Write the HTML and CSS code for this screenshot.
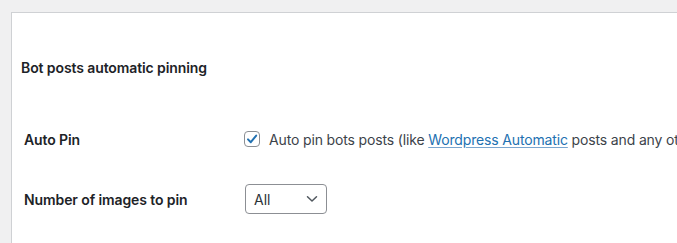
FILE: index.html
```html
<!DOCTYPE html>
<html lang="en">
<head>
    <meta charset="UTF-8">
    <title>Pin settings</title>
    <link rel="stylesheet" href="styles.css">
</head>
<body>

<div class="panel">
    <h3 class="panel-title">Bot posts automatic pinning</h3>

    <div class="form-table">
        <div class="form-row">
            <div class="form-label">Auto Pin</div>
            <div class="form-field">
                <label class="check">
                    <span class="check-box">
                        <svg width="14" height="14" viewBox="0 0 14 14"><path d="M3 7.4 L5.8 10.2 L11.2 3.6" fill="none" stroke="#2271b1" stroke-width="2" stroke-linecap="round" stroke-linejoin="round"/></svg>
                    </span>
                    <span class="check-text">Auto pin bots posts (like <a href="#">Wordpress Automatic</a> posts and any other bot plugin posts)</span>
                </label>
            </div>
        </div>
        <div class="form-row">
            <div class="form-label">Number of images to pin</div>
            <div class="form-field">
                <div class="select">
                    <span>All</span>
                    <svg width="12" height="8" viewBox="0 0 12 8"><path d="M1.5 1.8 L6 6 L10.5 1.8" fill="none" stroke="#50575e" stroke-width="1.5" stroke-linecap="round" stroke-linejoin="round"/></svg>
                </div>
            </div>
        </div>
    </div>
</div>

</body>
</html>
```

FILE: styles.css
```css
body {
    margin: 0;
    padding: 12px 0 0 11px;
    background-color: #f0f0f1;
    font-family: Inter, "Noto Sans", sans-serif;
    font-size: 14px;
    color: #3c434a;
    overflow: hidden;
    height: 231px;
}
.panel {
    background-color: #fff;
    border: 1px solid #cfd1d4;
    border-right: none;
    border-bottom: none;
    height: 230px;
    overflow: hidden;
    white-space: nowrap;
}
.panel-title {
    margin: 0;
    padding: 46px 0 0 9px;
    font-size: 14px;
    line-height: 18px;
    font-weight: 600;
    color: #1d2327;
    letter-spacing: -0.1px;
}
.form-table {
    margin-top: 32px;
    padding-left: 12px;
}
.form-row {
    display: grid;
    grid-template-columns: 221px auto;
    align-items: center;
    height: 60px;
}
.form-label {
    font-weight: 600;
    color: #1d2327;
    letter-spacing: -0.1px;
}
.form-field {
    display: flex;
    align-items: center;
    min-width: 0;
}
.check {
    display: flex;
    align-items: center;
    gap: 9px;
    letter-spacing: -0.15px;
}
.check-box {
    width: 14px;
    height: 14px;
    border: 1px solid #8c8f94;
    border-radius: 4px;
    display: flex;
    align-items: center;
    justify-content: center;
    margin-left: -1px;
    flex-shrink: 0;
}
.check a {
    color: #2271b1;
    text-decoration: underline;
    text-decoration-color: #7aa6cf;
    text-underline-offset: 2px;
}
.select {
    width: 64px;
    height: 28px;
    border: 1px solid #8c8f94;
    border-radius: 4px;
    padding: 0 8px;
    display: flex;
    align-items: center;
    justify-content: space-between;
    color: #2c3338;
}
```
